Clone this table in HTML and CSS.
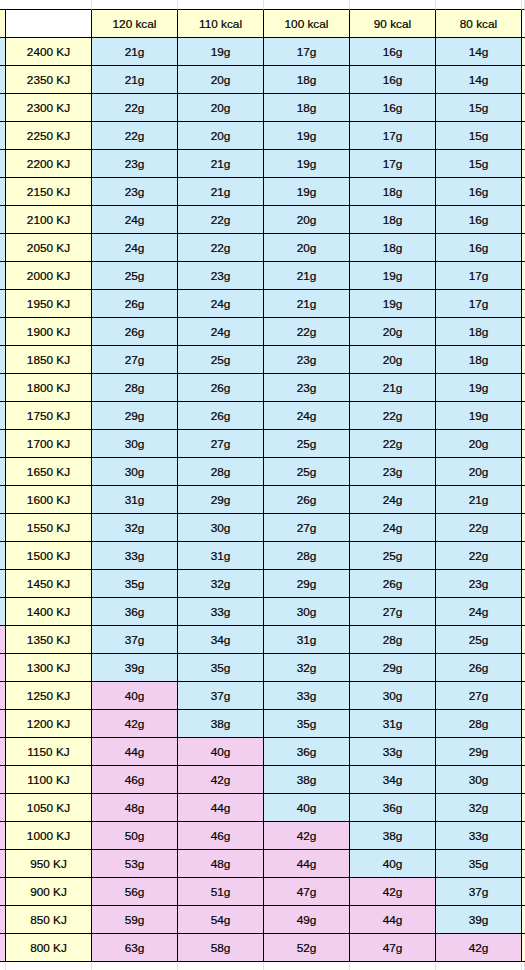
FILE: index.html
```html
<!DOCTYPE html>
<html>
<head>
<meta charset="utf-8">
<link rel="stylesheet" href="styles.css">
</head>
<body>
<div class="sheet">
<div class="c sp sl"></div><div class="c sp"></div><div class="c sp"></div><div class="c sp"></div><div class="c sp"></div><div class="c sp"></div><div class="c sp"></div><div class="c sp sr"></div>
<div class="c y sl"></div><div class="c w"></div><div class="c y">120 kcal</div><div class="c y">110 kcal</div><div class="c y">100 kcal</div><div class="c y">90 kcal</div><div class="c y">80 kcal</div><div class="c w sr"></div>
<div class="c b sl"></div><div class="c y">2400 KJ</div><div class="c b">21g</div><div class="c b">19g</div><div class="c b">17g</div><div class="c b">16g</div><div class="c b">14g</div><div class="c y sr"></div>
<div class="c b sl"></div><div class="c y">2350 KJ</div><div class="c b">21g</div><div class="c b">20g</div><div class="c b">18g</div><div class="c b">16g</div><div class="c b">14g</div><div class="c y sr"></div>
<div class="c b sl"></div><div class="c y">2300 KJ</div><div class="c b">22g</div><div class="c b">20g</div><div class="c b">18g</div><div class="c b">16g</div><div class="c b">15g</div><div class="c y sr"></div>
<div class="c b sl"></div><div class="c y">2250 KJ</div><div class="c b">22g</div><div class="c b">20g</div><div class="c b">19g</div><div class="c b">17g</div><div class="c b">15g</div><div class="c y sr"></div>
<div class="c b sl"></div><div class="c y">2200 KJ</div><div class="c b">23g</div><div class="c b">21g</div><div class="c b">19g</div><div class="c b">17g</div><div class="c b">15g</div><div class="c y sr"></div>
<div class="c b sl"></div><div class="c y">2150 KJ</div><div class="c b">23g</div><div class="c b">21g</div><div class="c b">19g</div><div class="c b">18g</div><div class="c b">16g</div><div class="c y sr"></div>
<div class="c b sl"></div><div class="c y">2100 KJ</div><div class="c b">24g</div><div class="c b">22g</div><div class="c b">20g</div><div class="c b">18g</div><div class="c b">16g</div><div class="c y sr"></div>
<div class="c b sl"></div><div class="c y">2050 KJ</div><div class="c b">24g</div><div class="c b">22g</div><div class="c b">20g</div><div class="c b">18g</div><div class="c b">16g</div><div class="c y sr"></div>
<div class="c b sl"></div><div class="c y">2000 KJ</div><div class="c b">25g</div><div class="c b">23g</div><div class="c b">21g</div><div class="c b">19g</div><div class="c b">17g</div><div class="c y sr"></div>
<div class="c b sl"></div><div class="c y">1950 KJ</div><div class="c b">26g</div><div class="c b">24g</div><div class="c b">21g</div><div class="c b">19g</div><div class="c b">17g</div><div class="c y sr"></div>
<div class="c b sl"></div><div class="c y">1900 KJ</div><div class="c b">26g</div><div class="c b">24g</div><div class="c b">22g</div><div class="c b">20g</div><div class="c b">18g</div><div class="c y sr"></div>
<div class="c b sl"></div><div class="c y">1850 KJ</div><div class="c b">27g</div><div class="c b">25g</div><div class="c b">23g</div><div class="c b">20g</div><div class="c b">18g</div><div class="c y sr"></div>
<div class="c b sl"></div><div class="c y">1800 KJ</div><div class="c b">28g</div><div class="c b">26g</div><div class="c b">23g</div><div class="c b">21g</div><div class="c b">19g</div><div class="c y sr"></div>
<div class="c b sl"></div><div class="c y">1750 KJ</div><div class="c b">29g</div><div class="c b">26g</div><div class="c b">24g</div><div class="c b">22g</div><div class="c b">19g</div><div class="c y sr"></div>
<div class="c b sl"></div><div class="c y">1700 KJ</div><div class="c b">30g</div><div class="c b">27g</div><div class="c b">25g</div><div class="c b">22g</div><div class="c b">20g</div><div class="c y sr"></div>
<div class="c b sl"></div><div class="c y">1650 KJ</div><div class="c b">30g</div><div class="c b">28g</div><div class="c b">25g</div><div class="c b">23g</div><div class="c b">20g</div><div class="c y sr"></div>
<div class="c b sl"></div><div class="c y">1600 KJ</div><div class="c b">31g</div><div class="c b">29g</div><div class="c b">26g</div><div class="c b">24g</div><div class="c b">21g</div><div class="c y sr"></div>
<div class="c b sl"></div><div class="c y">1550 KJ</div><div class="c b">32g</div><div class="c b">30g</div><div class="c b">27g</div><div class="c b">24g</div><div class="c b">22g</div><div class="c y sr"></div>
<div class="c b sl"></div><div class="c y">1500 KJ</div><div class="c b">33g</div><div class="c b">31g</div><div class="c b">28g</div><div class="c b">25g</div><div class="c b">22g</div><div class="c y sr"></div>
<div class="c b sl"></div><div class="c y">1450 KJ</div><div class="c b">35g</div><div class="c b">32g</div><div class="c b">29g</div><div class="c b">26g</div><div class="c b">23g</div><div class="c y sr"></div>
<div class="c b sl"></div><div class="c y">1400 KJ</div><div class="c b">36g</div><div class="c b">33g</div><div class="c b">30g</div><div class="c b">27g</div><div class="c b">24g</div><div class="c y sr"></div>
<div class="c p sl"></div><div class="c y">1350 KJ</div><div class="c b">37g</div><div class="c b">34g</div><div class="c b">31g</div><div class="c b">28g</div><div class="c b">25g</div><div class="c y sr"></div>
<div class="c p sl"></div><div class="c y">1300 KJ</div><div class="c b">39g</div><div class="c b">35g</div><div class="c b">32g</div><div class="c b">29g</div><div class="c b">26g</div><div class="c y sr"></div>
<div class="c p sl"></div><div class="c y">1250 KJ</div><div class="c p">40g</div><div class="c b">37g</div><div class="c b">33g</div><div class="c b">30g</div><div class="c b">27g</div><div class="c y sr"></div>
<div class="c p sl"></div><div class="c y">1200 KJ</div><div class="c p">42g</div><div class="c b">38g</div><div class="c b">35g</div><div class="c b">31g</div><div class="c b">28g</div><div class="c y sr"></div>
<div class="c p sl"></div><div class="c y">1150 KJ</div><div class="c p">44g</div><div class="c p">40g</div><div class="c b">36g</div><div class="c b">33g</div><div class="c b">29g</div><div class="c y sr"></div>
<div class="c p sl"></div><div class="c y">1100 KJ</div><div class="c p">46g</div><div class="c p">42g</div><div class="c b">38g</div><div class="c b">34g</div><div class="c b">30g</div><div class="c y sr"></div>
<div class="c p sl"></div><div class="c y">1050 KJ</div><div class="c p">48g</div><div class="c p">44g</div><div class="c b">40g</div><div class="c b">36g</div><div class="c b">32g</div><div class="c y sr"></div>
<div class="c p sl"></div><div class="c y">1000 KJ</div><div class="c p">50g</div><div class="c p">46g</div><div class="c p">42g</div><div class="c b">38g</div><div class="c b">33g</div><div class="c y sr"></div>
<div class="c p sl"></div><div class="c y">950 KJ</div><div class="c p">53g</div><div class="c p">48g</div><div class="c p">44g</div><div class="c b">40g</div><div class="c b">35g</div><div class="c y sr"></div>
<div class="c p sl"></div><div class="c y">900 KJ</div><div class="c p">56g</div><div class="c p">51g</div><div class="c p">47g</div><div class="c p">42g</div><div class="c b">37g</div><div class="c y sr"></div>
<div class="c p sl"></div><div class="c y">850 KJ</div><div class="c p">59g</div><div class="c p">54g</div><div class="c p">49g</div><div class="c p">44g</div><div class="c b">39g</div><div class="c y sr"></div>
<div class="c p sl"></div><div class="c y">800 KJ</div><div class="c p">63g</div><div class="c p">58g</div><div class="c p">52g</div><div class="c p">47g</div><div class="c p">42g</div><div class="c y sr"></div>
<div class="c ft sl"></div><div class="c ft"></div><div class="c ft"></div><div class="c ft"></div><div class="c ft"></div><div class="c ft"></div><div class="c ft"></div><div class="c ft sr"></div>
</div>
</body>
</html>
```

FILE: styles.css
```css
html, body {
  margin: 0;
  padding: 0;
  background: #ffffff;
}

body {
  font-family: "Liberation Sans", Arial, sans-serif;
  font-size: 11.8px;
  color: #000000;
  overflow: hidden;
}

.sheet {
  display: grid;
  grid-template-columns: 6px repeat(6, 86px) 1fr;
  grid-template-rows: 10px repeat(34, 28px) 1fr;
  width: 525px;
  height: 970px;
}

.c {
  box-sizing: border-box;
  display: flex;
  align-items: center;
  justify-content: center;
  border-right: 1px solid #000000;
  border-bottom: 1px solid #000000;
  white-space: nowrap;
  overflow: hidden;
  -webkit-text-stroke: 0.2px #000000;
}

.sr {
  border-right: none;
}

.sp {
  border-right: 1px solid #e1e1e1;
  background: #ffffff;
}

.sp.sl {
  border-right: none;
}

.ft {
  border-bottom: none;
  border-right: 1px solid #e1e1e1;
  background: #ffffff;
}

.ft.sl {
  border-right: 1px solid #e1e1e1;
}

.y {
  background: #ffffd4;
}

.w {
  background: #ffffff;
}

.b {
  background: #cdebf9;
}

.p {
  background: #f2cfef;
}
```
